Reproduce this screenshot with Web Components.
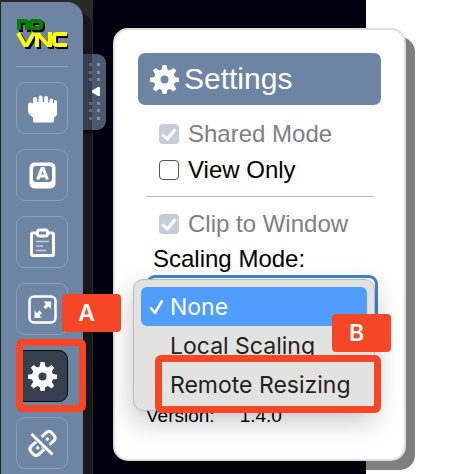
<!DOCTYPE html>
<html lang="en">
<head>
<meta charset="utf-8">
<title>noVNC settings</title>
<style>
html, body { margin: 0; height: 100%; }
body { background: #fff; font-family: "Liberation Sans", Arial, sans-serif; overflow: hidden; }
</style>
</head>
<body>
<vnc-app></vnc-app>
<script>
const GEAR = '<path fill="#fff" fill-rule="evenodd" d="M12.5 0h4l.8 4.3 2.6 1.1 3.6-2.5 2.8 2.8-2.5 3.6 1.1 2.6 4.1.8v4l-4.1.8-1.1 2.6 2.5 3.6-2.8 2.8-3.6-2.5-2.6 1.1-.8 3.9h-4l-.8-3.900-2.600-1.100-3.600 2.500-2.800-2.800 2.500-3.600-1.100-2.600L0 16.700v-4l4.200-.8 1.100-2.600-2.500-3.600 2.800-2.800 3.600 2.500 2.600-1.100zM14.500 10.600a4 4 0 1 0 0 8 4 4 0 0 0 0-8z"/>';
const ICONS = {
  hand: '<path fill="#fff" d="M0 11q0-2.500 2.500-2.500 1.500 0 2.500 1V5q0-2 2-2t2.200 2v3h1.300V3.500q0-2 2.100-2t2.100 2V8h1.400V4q0-2 2-2t2 2v4.500h1.400V6q0-1.500 1.800-1.500t1.800 1.500v3h1V7.500Q26 6 27.300 6 29 6 29 8v11q0 3-3 4.500V27q0 1.500-1.500 1.500h-18Q5 28.500 5 27v-3.500l-3.500-3Q0 19 0 17z"/>',
  keys: '<rect x="1.500" y="1.500" width="26" height="26" rx="5" fill="#fff"/><rect x="5" y="5" width="19" height="16" rx="3" fill="#6e84a3"/><path fill="none" stroke="#fff" stroke-width="3" d="M9.700 18.500l4.200-11h1.300l4.200 11M11 15h7"/>',
  clip: '<rect x="3.500" y="5" width="22" height="22.500" rx="1.500" fill="none" stroke="#fff" stroke-width="3"/><rect x="9.500" y="2" width="10" height="6" rx="2" fill="#6e84a3" stroke="#fff" stroke-width="3"/><path stroke="#c3cedd" stroke-width="1.500" d="M8 13.500h13M8 18h7M8 22.500h10"/>',
  full: '<rect x="1.500" y="1.500" width="26" height="26" rx="4.500" fill="none" stroke="#fff" stroke-width="2.500"/><path fill="#fff" d="M15.500 6.500H23V14l-2.500-2.500-2.700 2.700-2.500-2.500L18 9zM6.500 15.500L9 18l2.500-2.500 2.500 2.500-2.500 2.500L14 23H6.500z"/>',
  gear: GEAR,
  unlink: '<g fill="none" stroke="#fff" stroke-width="3"><g transform="translate(14.500 14.500) rotate(-42)" stroke-linejoin="round"><path d="M-2-5.500H-10q-4 0-4 4v3q0 4 4 4h8v-4M2-5.500H10q4 0 4 4v3q0 4-4 4H2M2-5.500v3M-8 0h3M5 0h3"/></g><path d="M4 3.500l21 20.500" stroke="#6e84a3" stroke-width="7"/><path d="M3.500 5l21 20.500"/></g>'
};

function define(name, html, setup) {
  const template = document.createElement('template');
  template.innerHTML = html;
  customElements.define(name, class extends HTMLElement {
    constructor() {
      super();
      this.attachShadow({ mode: 'open' }).append(template.content.cloneNode(true));
    }
    connectedCallback() { if (setup) setup(this, this.shadowRoot); }
  });
}

define('vnc-icon', `<style>
:host { display: block; width: 29px; height: 29px; }
svg { display: block; width: 100%; height: 100%; overflow: visible; }
</style><svg viewBox="0 0 29 29" aria-hidden="true"></svg>`,
(host, root) => { root.querySelector('svg').innerHTML = ICONS[host.getAttribute('name')]; });

define('tool-button', `<style>
:host { display: block; }
button { width: 52px; height: 52px; box-sizing: border-box; padding: 0; display: grid; place-items: center; background: none; border: 1px solid #8b9db7; border-radius: 9px; }
:host([active]) button { background: #36404f; border-color: #080a0d; }
</style><button type="button"><slot></slot></button>`,
(host, root) => root.querySelector('button').setAttribute('aria-label', host.getAttribute('label')));

define('vnc-logo', `<style>
:host { display: block; width: 54px; height: 35px; }
svg { display: block; width: 100%; height: 100%; }
</style><svg viewBox="0 0 54 35" role="img" aria-label="noVNC" fill="none" stroke-width="4">
<g stroke="#000" transform="translate(2 2)"><path d="M4 14V5h6q2 0 2 2v7M18 5h6q2 0 2 2v3q0 2-2 2h-6q-2 0-2-2V7q0-2 2-2z"/><path d="M3 17l7 12h2l7-12M22 31V19h2l9 10h2V16M51 18H42q-3 0-3 3v5q0 3 3 3h9"/></g>
<path stroke="#008000" d="M4 14V5h6q2 0 2 2v7M18 5h6q2 0 2 2v3q0 2-2 2h-6q-2 0-2-2V7q0-2 2-2z"/>
<path stroke="#ff0" d="M3 17l7 12h2l7-12M22 31V19h2l9 10h2V16M52 18H42q-3 0-3 3v5q0 3 3 3h10"/>
</svg>`);

define('side-bar', `<style>
:host { display: flex; flex-direction: column; align-items: center; gap: 15px; box-sizing: border-box; width: 83px; padding: 14px 0 0; background: #6e84a3; border-left: 1px solid #102b25; border-radius: 0 16px 0 0; box-shadow: 9px 9px 0 #171717; }
hr { width: 52px; margin: 0; border: 0; border-top: 1px solid #8fa0ba; }
</style><vnc-logo></vnc-logo><hr><slot></slot>`);

define('bar-handle', `<style>
:host { display: block; }
button { display: flex; align-items: center; justify-content: flex-end; box-sizing: border-box; width: 23px; height: 76px; padding: 0 5px 0 0; border: 0; border-radius: 0 9px 9px 0; background: linear-gradient(90deg, #343e4c 9px, #4b5a70 9px); box-shadow: 2px 3px 1px #00000080; }
svg { width: 12px; height: 62px; }
</style><button type="button" aria-label="Hide control bar"><svg viewBox="0 0 12 62" fill="#8291a8" aria-hidden="true">
<path fill="#5d6877" d="M0 2h3v3H0zM0 10h3v3H0zM0 17h3v3H0zM0 41h3v3H0zM0 48h3v3H0zM0 56h3v3H0z"/><path d="M8 2h3v3H8zM8 10h3v3H8zM8 17h3v3H8zM8 41h3v3H8zM8 48h3v3H8zM8 56h3v3H8z"/><path fill="#fff" d="M11 26v9H9L3 31.500v-2L9 26z"/></svg></button>`);

define('check-row', `<style>
:host { display: block; color: #000; }
:host([muted]) { color: #808080; }
label { display: flex; align-items: center; gap: 9px; height: 36px; font-size: 24px; white-space: nowrap; }
input { appearance: none; flex: none; box-sizing: border-box; width: 20px; height: 20px; margin: 0; border: 1px solid #555; border-radius: 4px; background: #fff; display: grid; place-items: center; }
input:disabled { border: 0; background: #c5cddb; }
input:checked::before { content: ""; box-sizing: border-box; width: 8px; height: 14px; margin-bottom: 3px; border: solid #fff; border-width: 0 3px 3px 0; transform: rotate(40deg); }
</style><label><input type="checkbox"><span><slot></slot></span></label>`,
(host, root) => {
  const box = root.querySelector('input');
  box.checked = host.hasAttribute('checked');
  box.disabled = host.hasAttribute('muted');
});

define('menu-option', `<style>
:host { display: block; }
button { display: flex; align-items: center; box-sizing: border-box; width: 100%; height: 39px; padding: 0 0 0 8px; border: 0; border-radius: 6px; background: none; color: #222; font: 23px Inter, sans-serif; text-align: left; white-space: nowrap; }
:host([selected]) button { background: #4f9dff; color: #fff; }
svg { flex: none; width: 15px; height: 16px; margin-right: 6px; visibility: hidden; }
:host([selected]) svg { visibility: visible; }
</style><button type="button" role="option"><svg viewBox="0 0 15 16" fill="none" stroke="#fff" stroke-width="2.500" stroke-linecap="round" stroke-linejoin="round" aria-hidden="true"><path d="M2 9l4 5 7-12"/></svg><slot></slot></button>`,
(host, root) => root.querySelector('button').setAttribute('aria-selected', host.hasAttribute('selected')));

define('option-menu', `<style>
:host { display: block; box-sizing: border-box; padding: 7px 7px 6px; border: 1px solid #bbb; border-radius: 10px; background: #e2e2e0; box-shadow: 0 10px 28px #0000003d; }
</style><div role="listbox" aria-label="Scaling Mode"><slot></slot></div>`);

define('note-tag', `<style>
:host { display: grid; place-items: center; width: 59px; height: 38px; box-sizing: border-box; padding-right: 10px; border-radius: 4px; background: #f54725; color: #fff; font: 600 23px Inter, sans-serif; }
</style><slot></slot>`);

define('note-frame', `<style>
:host { display: block; box-sizing: border-box; border: 7px solid #f54725; border-radius: 6px; pointer-events: none; }
</style>`);

define('settings-panel', `<style>
:host { display: block; box-sizing: border-box; padding: 23px 23px 29px; border: 2px solid #dedede; border-radius: 15px; background: #fff; box-shadow: 9px 9px 0 #00000080; color: #000; }
h1 { display: flex; align-items: center; gap: 5px; margin: 0; height: 52px; padding-left: 12px; border-radius: 7px; background: #6e84a3; color: #fff; font-size: 30px; font-weight: 400; line-height: 36px; }
.set { padding: 11px 0 0 21px; }
hr { margin: 8px 8px 9px 8px; border: 0; border-top: 1px solid #b7b7b7; }
.clip { padding-left: 21px; }
.scale { padding-left: 15px; }
label { display: block; height: 33px; font-size: 24px; line-height: 33px; }
.pick { position: relative; }
select { display: block; box-sizing: border-box; width: calc(100% + 4px); margin-left: -7px; height: 48px; border: 3px solid #3f86d2; border-radius: 9px; background: #fff; font-size: 24px; appearance: none; }
option-menu { position: absolute; z-index: 1; left: -20px; right: 6px; top: 4px; }
.b { position: absolute; z-index: 2; right: -10px; top: 39px; }
note-frame { position: absolute; z-index: 2; left: 2px; right: 0; top: 80px; height: 58px; }
dl { display: flex; gap: 25px; margin: 79px 0 0 8px; font-size: 19px; line-height: 28px; }
dd { margin: 0; }
</style>
<h1><vnc-icon name="gear"></vnc-icon>Settings</h1>
<div class="set"><check-row muted checked>Shared Mode</check-row><check-row>View Only</check-row></div>
<hr>
<div class="clip"><check-row muted checked>Clip to Window</check-row></div>
<div class="scale"><label for="mode">Scaling Mode:</label>
<div class="pick"><select id="mode"></select>
<option-menu><menu-option selected>None</menu-option><menu-option>Local Scaling</menu-option><menu-option>Remote Resizing</menu-option></option-menu>
<note-frame></note-frame><note-tag class="b">B</note-tag></div></div>
<dl><dt>Version:</dt><dd>1.4.0</dd></dl>`);

define('vnc-app', `<style>
:host { display: grid; grid-template-columns: 83px 30px minmax(0, 1fr); min-height: 100vh; padding-right: 70px; box-sizing: border-box; background: linear-gradient(90deg, #292929 93px, #00000f 93px, #00000f calc(100% - 110px), #fff calc(100% - 110px)); }
side-bar { margin-top: 2px; }
bar-handle { padding-top: 54px; z-index: 1; }
settings-panel { align-self: start; margin-top: 28px; z-index: 1; }
.tool { position: relative; }
.a { position: absolute; z-index: 2; left: 46px; top: 11px; }
note-frame { position: absolute; left: 0; top: -11px; width: 70px; height: 73px; }
</style>
<side-bar>
<tool-button label="Move viewport"><vnc-icon name="hand"></vnc-icon></tool-button>
<tool-button label="Extra keys"><vnc-icon name="keys"></vnc-icon></tool-button>
<tool-button label="Clipboard"><vnc-icon name="clip"></vnc-icon></tool-button>
<div class="tool"><tool-button label="Full screen"><vnc-icon name="full"></vnc-icon></tool-button><note-tag class="a">A</note-tag></div>
<div class="tool"><tool-button label="Settings" active><vnc-icon name="gear"></vnc-icon></tool-button><note-frame></note-frame></div>
<tool-button label="Disconnect"><vnc-icon name="unlink"></vnc-icon></tool-button>
</side-bar>
<bar-handle></bar-handle>
<settings-panel></settings-panel>`);
</script>
</body>
</html>
